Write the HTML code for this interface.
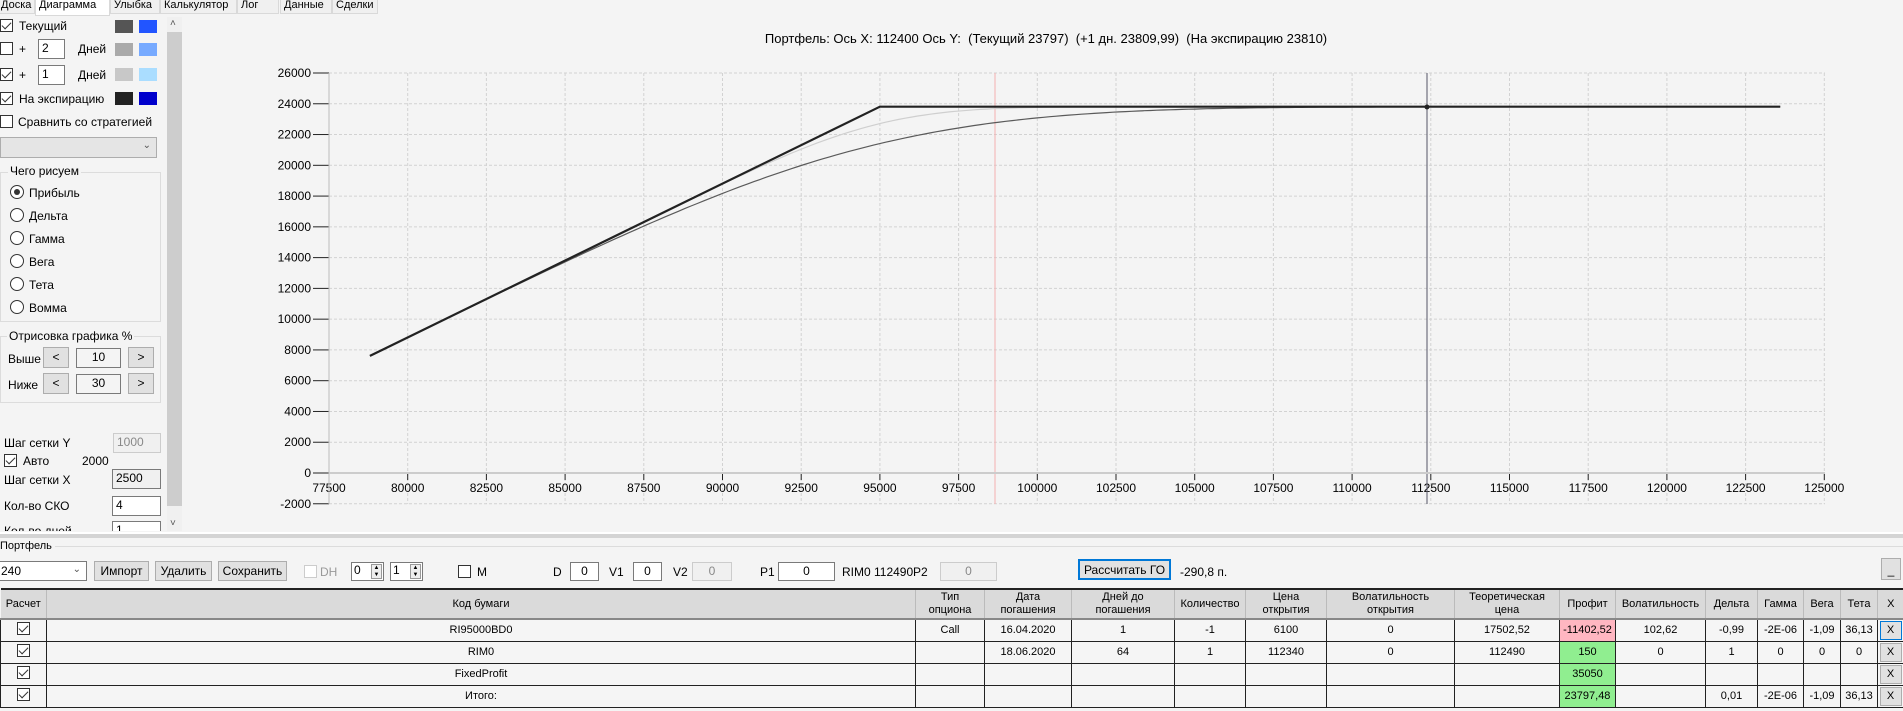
<!DOCTYPE html>
<html><head><meta charset="utf-8">
<style>
*{box-sizing:border-box;margin:0;padding:0}
body{width:1903px;height:711px;overflow:hidden;background:#f4f4f4;font-family:"Liberation Sans",Arial,sans-serif;font-size:11px;color:#000;position:relative}
.a{position:absolute;white-space:nowrap}
.cb{position:absolute;width:13px;height:13px;border:1px solid #333;background:#fff}
.cb.on::after{content:"";position:absolute;left:3px;top:0px;width:4px;height:8px;border:solid #333;border-width:0 1.3px 1.3px 0;transform:rotate(45deg)}
.tb{position:absolute;border:1px solid #7a7a7a;background:#fff;padding:1px 3px;font-size:12px}
.btn{position:absolute;border:1px solid #adadad;background:#e1e1e1;text-align:center;font-size:12px}
.rd{position:absolute;width:14px;height:14px;border:1px solid #333;border-radius:50%;background:#fff}
.rd.on::after{content:"";position:absolute;left:3px;top:3px;width:6px;height:6px;border-radius:50%;background:#333}
.grp{position:absolute;border:1px solid #dcdcdc}
.gt{position:absolute;background:#f4f4f4;padding:0 2px;font-size:12px}
.sw{position:absolute;width:18px;height:13px}
table{position:absolute;left:0;top:588px;border-collapse:collapse;table-layout:fixed;width:1903px;border-top:2px solid #222}
td,th{text-align:center;font-weight:normal;font-size:11px;overflow:hidden;white-space:nowrap}
th{background:#dadada;height:30px;border-left:1px solid #bbb;border-bottom:2px solid #888;line-height:13px}
td{height:22px;border:1px solid #222;background:#f5f5f5}
td.pk{background:#ffb6c1}td.gr{background:#90ee90}
.x{display:inline-block;width:22px;height:19px;border:1px solid #adadad;background:#e1e1e1;line-height:17px}
.tab{position:absolute;top:0;height:14px;line-height:11px;font-size:11px;border:1px solid #d9d9d9;border-top:none;background:#f0f0f0;padding-left:3px}
</style></head><body>
<div class="tab" style="left:-3px;width:38px">Доска</div>
<div class="tab" style="left:35px;width:75px;background:#fff;height:16px">Диаграмма</div>
<div class="tab" style="left:110px;width:50px">Улыбка</div>
<div class="tab" style="left:160px;width:77px">Калькулятор</div>
<div class="tab" style="left:237px;width:42px">Лог</div>
<div class="tab" style="left:280px;width:52px">Данные</div>
<div class="tab" style="left:332px;width:46px">Сделки</div>

<div class="cb on" style="left:0;top:19px"></div><div class="a" style="left:19px;top:19px;font-size:12px">Текущий</div>
<div class="sw" style="left:115px;top:20px;background:#555"></div><div class="sw" style="left:139px;top:20px;background:#2255ff"></div>
<div class="cb" style="left:0;top:42px"></div><div class="a" style="left:19px;top:42px;font-size:12px">+</div>
<div class="tb" style="left:38px;top:39px;width:27px;height:20px">2</div><div class="a" style="left:78px;top:42px;font-size:12px">Дней</div>
<div class="sw" style="left:115px;top:43px;background:#aaa"></div><div class="sw" style="left:139px;top:43px;background:#77aaff"></div>
<div class="cb on" style="left:0;top:68px"></div><div class="a" style="left:19px;top:68px;font-size:12px">+</div>
<div class="tb" style="left:38px;top:65px;width:27px;height:20px">1</div><div class="a" style="left:78px;top:68px;font-size:12px">Дней</div>
<div class="sw" style="left:115px;top:68px;background:#c8c8c8"></div><div class="sw" style="left:139px;top:68px;background:#aaddff"></div>
<div class="cb on" style="left:0;top:92px"></div><div class="a" style="left:19px;top:92px;font-size:12px">На экспирацию</div>
<div class="sw" style="left:115px;top:92px;background:#222"></div><div class="sw" style="left:139px;top:92px;background:#0000cc"></div>
<div class="cb" style="left:0;top:115px"></div><div class="a" style="left:18px;top:115px;font-size:12px">Сравнить со стратегией</div>
<div class="a" style="left:0;top:137px;width:157px;height:21px;border:1px solid #adadad;background:#e5e5e5"><span class="a" style="right:5px;top:2px;font-size:10px;color:#555">&#8964;</span></div>
<div class="grp" style="left:0;top:172px;width:161px;height:150px"></div><div class="gt" style="left:8px;top:164px">Чего рисуем</div>
<div class="rd on" style="left:10px;top:185px"></div><div class="a" style="left:29px;top:186px;font-size:12px">Прибыль</div>
<div class="rd" style="left:10px;top:208px"></div><div class="a" style="left:29px;top:209px;font-size:12px">Дельта</div>
<div class="rd" style="left:10px;top:231px"></div><div class="a" style="left:29px;top:232px;font-size:12px">Гамма</div>
<div class="rd" style="left:10px;top:254px"></div><div class="a" style="left:29px;top:255px;font-size:12px">Вега</div>
<div class="rd" style="left:10px;top:277px"></div><div class="a" style="left:29px;top:278px;font-size:12px">Тета</div>
<div class="rd" style="left:10px;top:300px"></div><div class="a" style="left:29px;top:301px;font-size:12px">Вомма</div>
<div class="grp" style="left:0;top:336px;width:161px;height:67px"></div><div class="gt" style="left:7px;top:329px">Отрисовка графика %</div>
<div class="a" style="left:8px;top:352px;font-size:12px">Выше</div>
<div class="btn" style="left:43px;top:347px;width:26px;height:21px;line-height:19px">&lt;</div>
<div class="tb" style="left:76px;top:348px;width:45px;height:20px;text-align:center;background:#f4f4f4">10</div>
<div class="btn" style="left:128px;top:347px;width:26px;height:21px;line-height:19px">&gt;</div>
<div class="a" style="left:8px;top:378px;font-size:12px">Ниже</div>
<div class="btn" style="left:43px;top:373px;width:26px;height:21px;line-height:19px">&lt;</div>
<div class="tb" style="left:76px;top:374px;width:45px;height:20px;text-align:center;background:#f4f4f4">30</div>
<div class="btn" style="left:128px;top:373px;width:26px;height:21px;line-height:19px">&gt;</div>
<div class="a" style="left:4px;top:436px;font-size:12px">Шаг сетки Y</div>
<div class="tb" style="left:113px;top:433px;width:48px;height:20px;background:#f0f0f0;border-color:#ccc;color:#888">1000</div>
<div class="cb on" style="left:4px;top:454px"></div><div class="a" style="left:23px;top:454px;font-size:12px">Авто</div><div class="a" style="left:82px;top:454px;font-size:12px">2000</div>
<div class="a" style="left:4px;top:473px;font-size:12px">Шаг сетки X</div>
<div class="tb" style="left:112px;top:469px;width:49px;height:20px;background:#f0f0f0">2500</div>
<div class="a" style="left:4px;top:499px;font-size:12px">Кол-во СКО</div>
<div class="tb" style="left:112px;top:496px;width:49px;height:20px">4</div>
<div class="a" style="left:0;top:520px;width:165px;height:11px;overflow:hidden"><div class="a" style="left:4px;top:4px;font-size:12px">Кол-во дней</div><div class="tb" style="left:112px;top:1px;width:49px;height:20px">1</div></div>
<div class="a" style="left:167px;top:17px;width:15px;height:514px;background:#f0f0f0"></div>
<div class="a" style="left:167px;top:32px;width:15px;height:474px;background:#cdcdcd"></div>
<div class="a" style="left:170px;top:18px;font-size:10px;color:#555">&#708;</div>
<div class="a" style="left:170px;top:518px;font-size:10px;color:#555">&#709;</div>

<svg class="a" style="left:0;top:0" width="1903" height="531" id="ch">
<text x="1046" y="43" font-size="13" text-anchor="middle" font-family="Liberation Sans" style="white-space:pre" xml:space="preserve">Портфель: Ось X: 112400 Ось Y:  (Текущий 23797)  (+1 дн. 23809,99)  (На экспирацию 23810)</text>
<g id="grid" stroke="#d2d2d2" stroke-dasharray="3,2" fill="none"></g>
<g id="labels" font-size="12" font-family="Liberation Sans"></g>
<line x1="995" y1="73" x2="995" y2="504" stroke="#f5b0b0"/>
<line x1="1427" y1="73" x2="1427" y2="504" stroke="#556"/>
<polyline id="c2" fill="none" stroke="#cfcfcf" stroke-width="1.2"/>
<polyline id="c1" fill="none" stroke="#5a5a5a" stroke-width="1.2"/>
<polyline id="c3" fill="none" stroke="#222" stroke-width="2.2"/>
<circle cx="1427" cy="107" r="2.5" fill="#222"/>
</svg>

<div class="a" style="left:0;top:532px;width:1903px;height:2px;background:#fff"></div>
<div class="a" style="left:0;top:534px;width:1903px;height:4px;background:#d4d4d4"></div>
<div class="a" style="left:0;top:546px;width:1903px;height:1px;background:#dcdcdc"></div>
<div class="a" style="left:0;top:540px;background:#f4f4f4;padding-right:3px">Портфель</div>

<div class="a" style="left:-1px;top:561px;width:88px;height:20px;border:1px solid #7a7a7a;background:#fff;font-size:12px;padding:2px 1px">240<span class="a" style="right:5px;top:2px;font-size:10px;color:#555">&#8964;</span></div>
<div class="btn" style="left:94px;top:561px;width:55px;height:20px;line-height:18px">Импорт</div>
<div class="btn" style="left:155px;top:561px;width:57px;height:20px;line-height:18px">Удалить</div>
<div class="btn" style="left:218px;top:561px;width:69px;height:20px;line-height:18px">Сохранить</div>
<div class="cb" style="left:304px;top:565px;border-color:#ccc"></div><div class="a" style="left:320px;top:565px;color:#999;font-size:12px">DH</div>
<div class="tb" style="left:351px;top:562px;width:33px;height:19px;padding:0 2px">0<span class="a" style="right:1px;top:1px;width:11px;height:15px;border:1px solid #999;background:#eee;font-size:6px;line-height:7px;text-align:center">▲<br>▼</span></div>
<div class="tb" style="left:390px;top:562px;width:33px;height:19px;padding:0 2px">1<span class="a" style="right:1px;top:1px;width:11px;height:15px;border:1px solid #999;background:#eee;font-size:6px;line-height:7px;text-align:center">▲<br>▼</span></div>
<div class="cb" style="left:458px;top:565px"></div><div class="a" style="left:477px;top:565px;font-size:12px">M</div>
<div class="a" style="left:553px;top:565px;font-size:12px">D</div><div class="tb" style="left:570px;top:562px;width:29px;height:19px;text-align:center">0</div>
<div class="a" style="left:609px;top:565px;font-size:12px">V1</div><div class="tb" style="left:633px;top:562px;width:29px;height:19px;text-align:center">0</div>
<div class="a" style="left:673px;top:565px;font-size:12px">V2</div><div class="tb" style="left:692px;top:562px;width:40px;height:19px;text-align:center;border-color:#ccc;background:#f0f0f0;color:#888">0</div>
<div class="a" style="left:760px;top:565px;font-size:12px">P1</div><div class="tb" style="left:778px;top:562px;width:57px;height:19px;text-align:center">0</div>
<div class="a" style="left:842px;top:565px;font-size:12px">RIM0 112490</div>
<div class="a" style="left:913px;top:565px;font-size:12px">P2</div><div class="tb" style="left:940px;top:562px;width:57px;height:19px;text-align:center;border-color:#ccc;background:#f0f0f0;color:#888">0</div>
<div class="btn" style="left:1078px;top:559px;width:93px;height:21px;line-height:18px;border:2px solid #0078d7">Рассчитать ГО</div>
<div class="a" style="left:1180px;top:565px;font-size:12px">-290,8 п.</div>
<div class="btn" style="left:1881px;top:558px;width:20px;height:22px;line-height:22px">_</div>

<table>
<colgroup><col style="width:46px"><col style="width:869px"><col style="width:69px"><col style="width:87px"><col style="width:103px"><col style="width:71px"><col style="width:81px"><col style="width:128px"><col style="width:105px"><col style="width:56px"><col style="width:90px"><col style="width:52px"><col style="width:46px"><col style="width:37px"><col style="width:37px"><col style="width:26px"></colgroup>
<tr><th style="border-left:none">Расчет</th><th>Код бумаги</th><th>Тип<br>опциона</th><th>Дата<br>погашения</th><th>Дней до<br>погашения</th><th>Количество</th><th>Цена<br>открытия</th><th>Волатильность<br>открытия</th><th>Теоретическая<br>цена</th><th>Профит</th><th>Волатильность</th><th>Дельта</th><th>Гамма</th><th>Вега</th><th>Тета</th><th>X</th></tr>
<tr><td><span class="cb on" style="position:relative;display:inline-block"></span></td><td>RI95000BD0</td><td>Call</td><td>16.04.2020</td><td>1</td><td>-1</td><td>6100</td><td>0</td><td>17502,52</td><td class="pk">-11402,52</td><td>102,62</td><td>-0,99</td><td>-2E-06</td><td>-1,09</td><td>36,13</td><td><span class="x" style="border-color:#0078d7">X</span></td></tr>
<tr><td><span class="cb on" style="position:relative;display:inline-block"></span></td><td>RIM0</td><td></td><td>18.06.2020</td><td>64</td><td>1</td><td>112340</td><td>0</td><td>112490</td><td class="gr">150</td><td>0</td><td>1</td><td>0</td><td>0</td><td>0</td><td><span class="x">X</span></td></tr>
<tr><td><span class="cb on" style="position:relative;display:inline-block"></span></td><td>FixedProfit</td><td></td><td></td><td></td><td></td><td></td><td></td><td></td><td class="gr">35050</td><td></td><td></td><td></td><td></td><td></td><td><span class="x">X</span></td></tr>
<tr><td><span class="cb on" style="position:relative;display:inline-block"></span></td><td>Итого:</td><td></td><td></td><td></td><td></td><td></td><td></td><td></td><td class="gr">23797,48</td><td></td><td>0,01</td><td>-2E-06</td><td>-1,09</td><td>36,13</td><td><span class="x">X</span></td></tr>
</table>

<script>
(function(){
var NS="http://www.w3.org/2000/svg";
function X(s){return 329+(s-77500)/2500*78.7}
function Y(v){return 473-v*400/26000}
var ch=document.getElementById("ch"),g=document.getElementById("grid"),L=document.getElementById("labels");
function el(p,t,a){var e=document.createElementNS(NS,t);for(var k in a)e.setAttribute(k,a[k]);p.appendChild(e);return e}
for(var s=77500;s<=125000;s+=2500){var x=X(s);el(g,"line",{x1:x,y1:73,x2:x,y2:504});
 var t=el(L,"text",{x:x,y:492,"text-anchor":"middle"});t.textContent=s;
 el(ch,"line",{x1:x,y1:473,x2:x,y2:480,stroke:"#222"});}
for(var v=-2000;v<=26000;v+=2000){var y=Y(v);el(g,"line",{x1:329,y1:y,x2:1825,y2:y});
 var t=el(L,"text",{x:311,y:y+4,"text-anchor":"end"});t.textContent=v;
 el(ch,"line",{x1:313,y1:y,x2:329,y2:y,stroke:"#222"});}
el(ch,"line",{x1:329,y1:73,x2:329,y2:504,stroke:"#bbb"});
el(ch,"line",{x1:329,y1:473,x2:1825,y2:473,stroke:"#ccc","stroke-width":2});
function N(x){var t=1/(1+0.2316419*Math.abs(x)),d=0.3989423*Math.exp(-x*x/2),p=d*t*(0.3193815+t*(-0.3565638+t*(1.781478+t*(-1.821256+t*1.330274))));return x>0?1-p:p}
function C(S,K,sv){var d1=Math.log(S/K)/sv+sv/2;return S*N(d1)-K*N(d1-sv)}
function curve(id,sv){var pts=[];for(var S=78800;S<=123600;S+=200){var ex=Math.min(S-71190,23810);var tv=C(S,95000,sv)-Math.max(S-95000,0);pts.push(X(S).toFixed(1)+","+Y(ex-tv).toFixed(1))}document.getElementById(id).setAttribute("points",pts.join(" "))}
curve("c1",0.0633);curve("c2",0.029);
document.getElementById("c3").setAttribute("points",X(78800)+","+Y(7610)+" "+X(95000)+","+Y(23810)+" "+X(123600)+","+Y(23810));
})();
</script>
</body></html>
